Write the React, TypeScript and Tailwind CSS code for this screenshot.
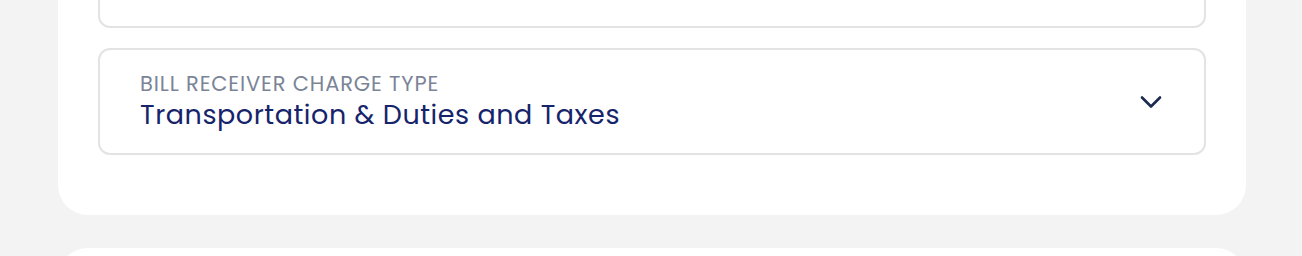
function SelectField({ label, value }: { label: string; value: string }) {
  return (
    <div className="flex h-[107px] items-center justify-between rounded-xl border-2 border-[#e3e3e3] bg-white pl-10 pr-[42px]">
      <div className="flex flex-col pt-[1px]">
        <span className="text-[21px] leading-[26px] tracking-[0.85px] uppercase text-[#7b8497]">{label}</span>
        <span className="text-[27px] leading-[36px] tracking-[0.55px] text-[#16246b]">{value}</span>
      </div>
      <svg width="22" height="14" viewBox="0 0 22 14" fill="none" className="text-[#1b2a4e]">
        <polyline points="2,2.5 11,11.5 20,2.5" stroke="currentColor" strokeWidth="2.6" strokeLinecap="round" strokeLinejoin="round" />
      </svg>
    </div>
  );
}

export default function App() {
  return (
    <div
      className="h-[256px] overflow-hidden bg-[#f3f3f3] px-[56px]"
      style={{ fontFamily: "Poppins, Inter, 'Noto Sans', sans-serif" }}
    >
      <div className="-mt-[119px] ml-[2px] flex w-[1188px] flex-col gap-5 rounded-[30px] bg-white px-10 pt-10 pb-[60px]">
        <div className="h-[107px] rounded-xl border-2 border-[#e3e3e3] bg-white" />
        <SelectField label="Bill Receiver Charge Type" value="Transportation & Duties and Taxes" />
      </div>
      <div className="mt-[33px] ml-[2px] h-[120px] w-[1188px] rounded-[30px] bg-white" />
    </div>
  );
}
